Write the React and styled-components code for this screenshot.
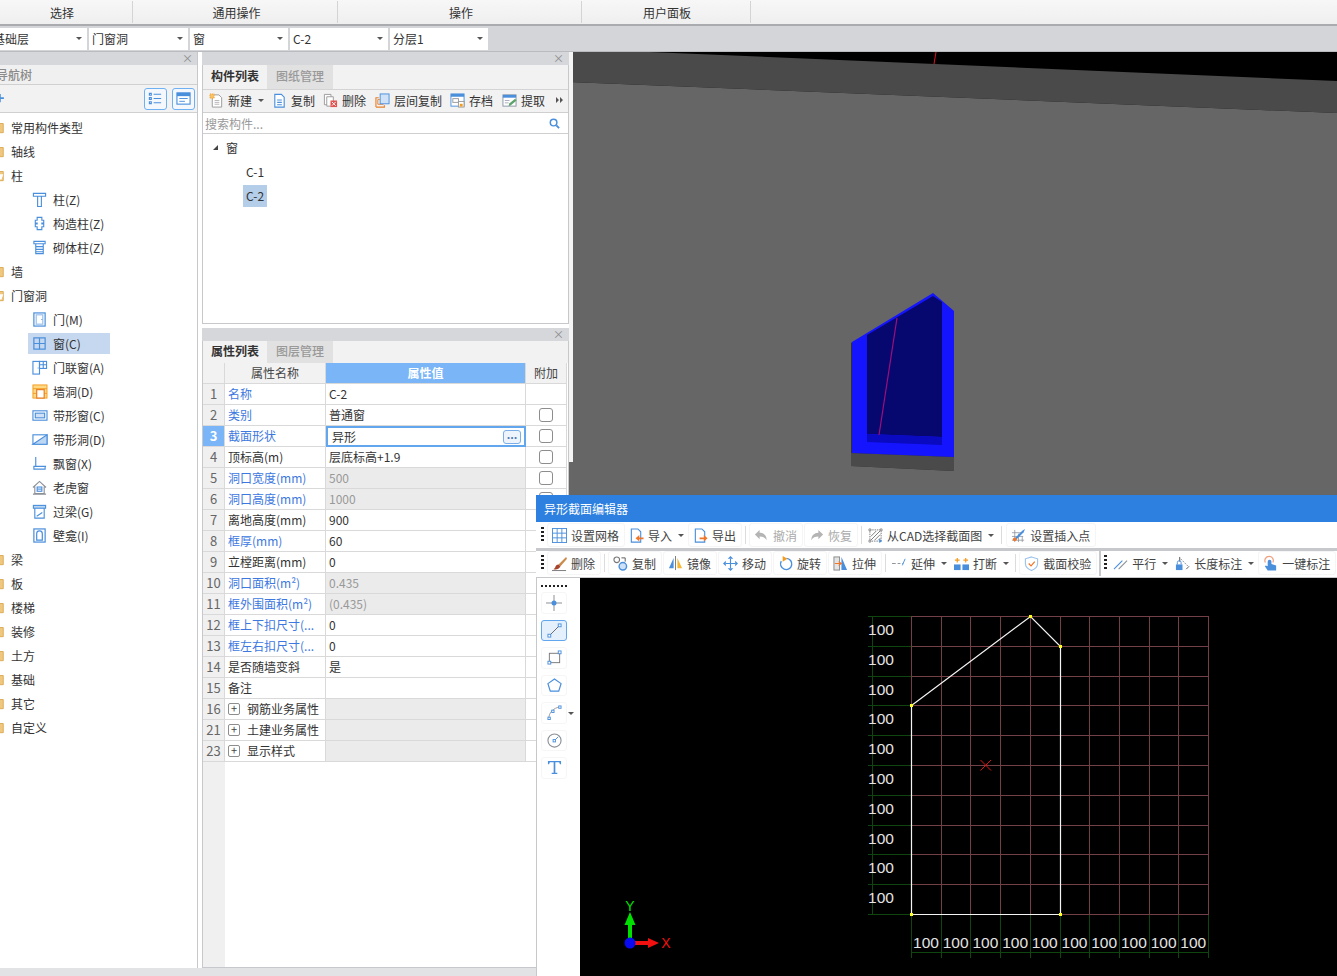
import React from "react";
import styled, { createGlobalStyle } from "styled-components";

const BLUE = "#4a8fdc";
const ORANGE = "#f39c1f";
const GRAY = "#8b9097";

const GlobalStyle = createGlobalStyle`
    html, body {
        margin: 0;
        padding: 0;
        background: #fff;
    }
    body {
        width: 1337px;
        height: 976px;
        overflow: hidden;
        font-family: "Noto Sans CJK SC", "Noto Sans", sans-serif;
        font-size: 12px;
        color: #333;
    }
`;

const Page = styled.div`
    position: relative;
    width: 1337px;
    height: 976px;
    overflow: hidden;
    display: flex;
    flex-direction: column;
`;

const MenuBar = styled.div`
    height: 24px;
    flex: none;
    display: grid;
    grid-template-columns: 133px 205px 244px 169px 1fr;
    background: linear-gradient(#f7f7f7, #efefef);
    border-bottom: 2px solid #a9abae;
`;

const MenuGroup = styled.div`
    margin-top: 1px;
    height: 22px;
    line-height: 23px;
    text-align: center;
    border-right: ${(p) => (p.$plain ? "none" : "1px solid #d4d4d4")};
    padding-right: ${(p) => p.$padR || 0}px;
    padding-left: ${(p) => p.$padL || 0}px;
    box-sizing: border-box;
`;

const SelectBar = styled.div`
    height: 26px;
    flex: none;
    display: flex;
    align-items: center;
    gap: 2px;
    background: #d3d5d9;
    margin-left: -10px;
    border-bottom: 1px solid #b9bbbf;
    box-sizing: border-box;
`;

const SelectBox = styled.div`
    width: ${(p) => p.$w}px;
    height: 22px;
    line-height: 22px;
    background: #fff;
    padding-left: 3px;
    box-sizing: border-box;
    display: flex;
    justify-content: space-between;
    align-items: center;
    padding-right: 5px;
`;

const Caret = styled.i`
    flex: none;
    display: block;
    width: 0;
    height: 0;
    border-left: 3px solid transparent;
    border-right: 3px solid transparent;
    border-top: 3px solid #555;
    margin-left: ${(p) => p.$ml || 0}px;
`;

const Main = styled.div`
    flex: 1;
    display: flex;
    min-height: 0;
`;

const LeftArea = styled.div`
    width: 569px;
    flex: none;
    display: flex;
    flex-direction: column;
`;

const Panels = styled.div`
    flex: 1;
    display: flex;
    min-height: 0;
`;

const BottomScroll = styled.div`
    height: 8px;
    flex: none;
    background: #e2e3e5;
`;

const NavPanel = styled.div`
    width: 198px;
    flex: none;
    display: flex;
    flex-direction: column;
    border-right: 1px solid #c6c8cb;
    box-sizing: border-box;
    overflow: hidden;
`;

const CenterColumn = styled.div`
    margin-left: 4px;
    width: 367px;
    flex: none;
    display: flex;
    flex-direction: column;
    gap: 4px;
`;

const Dock = styled.div`
    display: flex;
    flex-direction: column;
    border: 1px solid #c6c8cb;
    border-top: none;
    box-sizing: border-box;
    flex: ${(p) => (p.$grow ? "1" : "none")};
    height: ${(p) => (p.$h ? `${p.$h}px` : "auto")};
    min-height: 0;
`;

const DockHead = styled.div`
    height: 13px;
    flex: none;
    background: #d5d7db;
    color: #8a8a8a;
    font-size: 11px;
    line-height: 13px;
    text-align: right;
    padding-right: 5px;
    margin: 0 -1px;
`;

const NavTitle = styled.div`
    height: 19px;
    flex: none;
    line-height: 19px;
    background: #f0f0f0;
    color: #8a8a8a;
    font-weight: 500;
    margin-left: -4px;
    border-bottom: 1px solid #d0d0d0;
`;

const NavTools = styled.div`
    height: 28px;
    flex: none;
    display: flex;
    align-items: center;
    background: #f2f2f2;
    border-bottom: 1px solid #d0d0d0;
    padding-right: 2px;
    gap: 5px;
    box-sizing: border-box;
`;

const NavPlus = styled.div`
    margin-left: -3px;
`;

const NavToolBtn = styled.div`
    width: 23px;
    height: 22px;
    border: 1px solid #6fb0f2;
    border-radius: 3px;
    box-sizing: border-box;
    display: flex;
    align-items: center;
    justify-content: center;
    background: #f4f8fd;
`;

const Spacer = styled.div`
    flex: 1;
`;

const NavTree = styled.div`
    padding-top: 2px;
    flex: 1;
    background: #fff;
`;

const NavRootRow = styled.div`
    height: 24px;
    display: flex;
    align-items: center;
    gap: 6px;
    margin-left: -9px;
`;

const NavItemRow = styled.div`
    height: 24px;
    display: flex;
    align-items: center;
    padding-left: 28px;
`;

const NavItem = styled.div`
    height: 21px;
    width: ${(p) => (p.$on ? "82px" : "auto")};
    display: flex;
    align-items: center;
    gap: 6px;
    padding-left: 4px;
    box-sizing: border-box;
    background: ${(p) => (p.$on ? "#c6d8ef" : "transparent")};
`;

const TabRow = styled.div`
    height: ${(p) => p.$h}px;
    flex: none;
    display: flex;
    align-items: flex-end;
    background: #f2f2f2;
`;

const Tab = styled.div`
    width: ${(p) => (p.$on ? "64px" : "66px")};
    height: 100%;
    line-height: ${(p) => p.$lh}px;
    text-align: center;
    font-weight: ${(p) => (p.$on ? 600 : 500)};
    color: ${(p) => (p.$on ? "#333" : "#999")};
    background: ${(p) => (p.$on ? "#f2f2f2" : "#e1e1e1")};
    box-sizing: border-box;
`;

const ListTools = styled.div`
    height: 24px;
    flex: none;
    display: flex;
    align-items: center;
    background: #f2f2f2;
    border-top: 1px solid #d4d4d4;
    border-bottom: 1px solid #cfcfcf;
    padding: 0 0 2px 6px;
    box-sizing: border-box;
`;

const ListTool = styled.div`
    display: flex;
    align-items: center;
    gap: 4px;
    margin-right: ${(p) => p.$mr || 8}px;
    white-space: nowrap;
`;

const SearchRow = styled.div`
    height: 20px;
    flex: none;
    display: flex;
    align-items: center;
    justify-content: space-between;
    padding: 0 8px 0 2px;
    color: #999;
    border-bottom: 1px solid #cfcfcf;
    background: #fff;
`;

const ListTree = styled.div`
    flex: 1;
    padding-top: 2px;
    background: #fff;
`;

const ListRow = styled.div`
    height: 24px;
    display: flex;
    align-items: center;
    box-sizing: border-box;
    padding-left: ${(p) => p.$indent}px;
    padding-bottom: ${(p) => (p.$lift ? 2 : 0)}px;
`;

const ListTriangle = styled.i`
    width: 0;
    height: 0;
    border-left: 5px solid transparent;
    border-bottom: 5px solid #444;
    margin-right: 8px;
`;

const ListLabel = styled.span`
    height: 22px;
    line-height: 22px;
    padding: 0 3px;
    background: ${(p) => (p.$on ? "#b4cde9" : "transparent")};
`;

const TableWrap = styled.div`
    flex: 1;
    display: flex;
    flex-direction: column;
    min-height: 0;
    background: #fff;
`;

const Row = styled.div`
    display: grid;
    grid-template-columns: 22px 101px 200px 41px;
    height: 21px;
    flex: none;
`;

const Cell = styled.div`
    box-sizing: border-box;
    border-right: 1px solid #d9d9d9;
    border-bottom: 1px solid #d9d9d9;
    line-height: 20px;
    padding-left: 3px;
    white-space: nowrap;
    overflow: hidden;
    display: flex;
    align-items: center;
    color: ${(p) => (p.$blue ? "#3d78e0" : "#333")};
`;

const HeadCell = styled(Cell)`
    justify-content: center;
    padding: 0;
    background: ${(p) => (p.$on ? "#7ab6f7" : "#f2f2f2")};
    color: ${(p) => (p.$on ? "#fff" : "#444")};
    font-weight: ${(p) => (p.$on ? 600 : 400)};
`;

const NumCell = styled(Cell)`
    justify-content: center;
    padding: 0;
    font-size: 13px;
    background: ${(p) => (p.$on ? "#7ab6f7" : "#f0f0f0")};
    color: ${(p) => (p.$on ? "#fff" : "#666")};
    font-weight: ${(p) => (p.$on ? 700 : 400)};
`;

const ValueCell = styled(Cell)`
    background: ${(p) => (p.$off ? "#ebebeb" : "#fff")};
    color: ${(p) => (p.$off ? "#999" : "#333")};
`;

const EditCell = styled(Cell)`
    border: 2px solid #62a6ee;
    justify-content: space-between;
    padding: 0 3px 0 4px;
`;

const MoreBtn = styled.div`
    width: 16px;
    height: 12px;
    border: 1px solid #79aee6;
    border-radius: 3px;
    background: #eef4fb;
    color: #4a78b0;
    font-size: 11px;
    font-weight: 700;
    line-height: 7px;
    text-align: center;
`;

const CheckCell = styled(Cell)`
    justify-content: center;
    padding: 0;
`;

const CheckBox = styled.div`
    width: 14px;
    height: 14px;
    border: 1px solid #8d8d8d;
    border-radius: 3px;
    box-sizing: border-box;
    background: #fff;
`;

const PlusBox = styled.div`
    width: 12px;
    height: 12px;
    border: 1px solid #8d8d8d;
    border-radius: 2px;
    box-sizing: border-box;
    color: #444;
    font-size: 11px;
    line-height: 9px;
    text-align: center;
    margin-right: 7px;
`;

const TableFill = styled.div`
    flex: 1;
    width: 22px;
    background: #f0f0f0;
`;

const ViewPane = styled.div`
    flex: 1;
    min-width: 0;
    background: #000;
    line-height: 0;
`;

const Editor = styled.div`
    position: absolute;
    left: 536px;
    top: 495px;
    width: 801px;
    height: 481px;
    display: flex;
    flex-direction: column;
    background: #fff;
`;

const EditorTitle = styled.div`
    height: 27px;
    flex: none;
    line-height: 27px;
    background: #2d7fe0;
    color: #fff;
    padding-left: 8px;
`;

const EditorBar = styled.div`
    height: 26px;
    flex: none;
    display: flex;
    align-items: center;
    padding-left: 5px;
    padding-bottom: ${(p) => (p.$lift ? 2 : 0)}px;
    box-sizing: border-box;
    background: #fff;
    gap: 1px;
`;

const BarRule = styled.div`
    height: ${(p) => p.$h}px;
    flex: none;
    background: #c6c8cb;
`;

const Grip = styled.div`
    width: 3px;
    height: 16px;
    flex: none;
    margin-right: 2px;
    background: repeating-linear-gradient(#222 0 2px, transparent 2px 4px);
`;

const ToolBtn = styled.div`
    height: 22px;
    display: flex;
    align-items: center;
    gap: 4px;
    padding: 0 ${(p) => (p.$caret ? 2 : 5)}px 0 ${(p) => (p.$caret ? 2 : 4)}px;
    border: 1px solid ${(p) => (p.$caret ? "transparent" : "#f5f5f5")};
    border-radius: 3px;
    white-space: nowrap;
    color: ${(p) => (p.$off ? "#aaa" : "#444")};
`;

const ToolSep = styled.div`
    width: 1px;
    height: 18px;
    flex: none;
    margin: 0 ${(p) => p.$m || 2}px;
    background: #dcdcdc;
`;

const ThickSep = styled.div`
    width: 2px;
    height: 26px;
    flex: none;
    margin: 0 2px 0 1px;
    background: #c6c8cb;
`;

const EditorBody = styled.div`
    flex: 1;
    display: flex;
    min-height: 0;
`;

const SideTools = styled.div`
    width: 44px;
    flex: none;
    display: flex;
    flex-direction: column;
    align-items: flex-start;
    box-sizing: border-box;
    border-left: 1px solid #c6c8cb;
    padding-left: 4px;
    gap: 6px;
`;

const SideDots = styled.div`
    width: 26px;
    height: 2px;
    margin: 7px 0 -1px;
    background: repeating-linear-gradient(90deg, #222 0 2px, transparent 2px 4px);
`;

const SideBtn = styled.div`
    width: 26px;
    height: 21.5px;
    flex: none;
    position: relative;
    display: flex;
    align-items: center;
    justify-content: center;
    box-sizing: border-box;
    border: 1px solid ${(p) => (p.$on ? "#62a6ee" : "#f6f6f6")};
    border-radius: 3px;
    background: ${(p) => (p.$on ? "#e4f0fc" : "#fff")};
`;

const SideCaret = styled(Caret)`
    position: absolute;
    left: 26px;
    top: 9px;
`;

const Canvas = styled.div`
    flex: 1;
    min-width: 0;
    background: #000;
    line-height: 0;
`;

// small 16x16 drawings shared by every toolbar
const ICONS = {
    folder: <path d="M0 2h6l1.500 2H14v10.500H0z" fill="#efc77e" stroke="#d9a850" />,
    folderOpen: (
        <>
            <path d="M0 2h6l1.500 2H14v10.500H0z" fill="#efc77e" stroke="#d9a850" />
            <path d="M7 7h7l-2 6H7z" fill="#fff" />
        </>
    ),
    column: (
        <g fill="none" stroke={BLUE} strokeWidth="1.2">
            <path d="M1.5 1.5h13v3h-13zM5 4.5h6M6 4.5v11h4v-11" />
        </g>
    ),
    conColumn: (
        <path d="M5.5 1.5h5v3h2v3h-2v1h2v3h-2v3h-5v-3h-2v-3h2v-1h-2v-3h2z" fill="none" stroke={BLUE} strokeWidth="1.2" />
    ),
    brickColumn: (
        <g fill="none" stroke={BLUE} strokeWidth="1.2">
            <path d="M2 1.5h12v2.5H2zM4 4v10.5h8V4M4 7h8M4 10h8M4 12.5h8" />
        </g>
    ),
    door: (
        <g fill="none" stroke={BLUE} strokeWidth="1.3">
            <rect x="2" y="1" width="12" height="14" />
            <rect x="4.5" y="3" width="7" height="10" stroke="#9cc2ec" />
            <path d="M10 8h1" />
        </g>
    ),
    windowPane: (
        <g fill="none" stroke={BLUE} strokeWidth="1.3">
            <rect x="2" y="2" width="12" height="12" />
            <path d="M8 2v12M2 8h12" />
        </g>
    ),
    doorWindow: (
        <g fill="none" stroke={BLUE} strokeWidth="1.2">
            <rect x="1" y="1.5" width="7" height="13.5" />
            <rect x="8" y="1.5" width="7.5" height="7.5" />
            <path d="M12 1.5v7.5M8 5h7.5M6 8.5h1" />
        </g>
    ),
    wallHole: (
        <g>
            <rect x="1" y="1" width="15" height="14" fill="#ffd884" stroke={ORANGE} />
            <path d="M1 5h15M1 10h4M12 10h4" stroke={ORANGE} />
            <rect x="5" y="6" width="8" height="9" fill="#fff" stroke="#e8802a" strokeWidth="1.3" />
        </g>
    ),
    stripWindow: (
        <g fill="none" stroke={BLUE} strokeWidth="1.2">
            <rect x="1" y="3" width="15" height="10" />
            <rect x="3.5" y="5.5" width="10" height="5" fill="#cfe1f6" />
        </g>
    ),
    stripHole: (
        <g fill="none" stroke={BLUE} strokeWidth="1.2">
            <rect x="1" y="3" width="15" height="10" />
            <path d="M1 13L16 3v10z" fill="#bcd6f3" />
        </g>
    ),
    bay: (
        <g fill="none" stroke={BLUE} strokeWidth="1.2">
            <path d="M4 1v10h11M2 11h12v3H2z" />
        </g>
    ),
    dormer: (
        <g fill="none" stroke={GRAY} strokeWidth="1.2">
            <path d="M1 8l7-6.500L15 8M3 7v7.500h10V7M1 15h14" />
            <rect x="5.500" y="7.500" width="5" height="4.500" stroke={BLUE} />
            <path d="M5.500 9.700h5" stroke={BLUE} />
        </g>
    ),
    lintel: (
        <g fill="none" stroke={BLUE} strokeWidth="1.2">
            <rect x="1.500" y="1.500" width="13" height="3" fill="#bcd6f3" />
            <path d="M3 4.500v10.500h10V4.500M5 13l6-4" />
        </g>
    ),
    niche: (
        <g fill="none" stroke={BLUE} strokeWidth="1.3">
            <rect x="2" y="1" width="12" height="14" />
            <path d="M5 13V6a3 3 0 0 1 6 0v7z" />
        </g>
    ),
    plusStar: <path d="M6 0v5h5v3H6v5H3V8H0V5h3V0z" fill={BLUE} />,
    listView: (
        <g fill="none" stroke={BLUE} strokeWidth="1.2">
            <path d="M6 3.500h8M6 8h8M6 12.500h8" />
            <path d="M1.500 2.500h2v2h-2zM1.500 7h2v2h-2zM1.500 11.500h2v2h-2z" />
        </g>
    ),
    panelView: (
        <g>
            <rect x="1" y="2" width="14" height="12" fill="#fff" stroke={BLUE} strokeWidth="1.2" />
            <rect x="1" y="2" width="14" height="3.500" fill={BLUE} />
            <path d="M3.500 8h9M3.500 11h6" stroke={BLUE} />
        </g>
    ),
    newDoc: (
        <g>
            <path d="M3.500 2h7l3 3v10h-10z" fill="#fff" stroke="#9a9a9a" />
            <path d="M6 8h5M6 10h5M6 12h5" stroke="#b5b5b5" />
            <rect x="1" y="1" width="4.500" height="4.500" fill="#f7c26a" stroke={ORANGE} strokeDasharray="1 1" />
        </g>
    ),
    copyDoc: (
        <g fill="#fff" stroke={BLUE} strokeWidth="1.200">
            <path d="M3 1.500h7l3 3v10.500H3z" />
            <path d="M5.500 7.500h5M5.500 10h5M5.500 12.500h5" fill="none" />
        </g>
    ),
    deleteDoc: (
        <g>
            <path d="M1.500 1.500h7v11h-7z" fill="#fff" stroke="#9a9a9a" />
            <path d="M4 4h7v10H4z" fill="#fff" stroke="#9a9a9a" />
            <rect x="8" y="8" width="7" height="7" fill="#e2534f" />
            <path d="M9.500 9.500l4 4M13.500 9.500l-4 4" stroke="#fff" />
        </g>
    ),
    floorCopy: (
        <g>
            <path d="M1 15V5h3M1 15h9v-2" fill="none" stroke="#e8802a" strokeWidth="1.200" />
            <path d="M3 12V7h2M3 12h6" fill="none" stroke="#e8802a" />
            <rect x="5.500" y="1" width="9.500" height="10.500" fill="#cfe1f6" stroke={BLUE} />
        </g>
    ),
    archive: (
        <g>
            <rect x="1" y="1" width="14" height="13" fill="#fff" stroke={BLUE} />
            <rect x="1" y="1" width="14" height="3" fill={BLUE} />
            <rect x="3" y="6" width="6" height="4" fill="#fff" stroke="#999" />
            <rect x="9" y="9" width="6" height="6" fill="#fff" stroke="#999" />
            <rect x="10.500" y="11.500" width="3" height="3" fill={ORANGE} />
        </g>
    ),
    extract: (
        <g>
            <rect x="1" y="2" width="14" height="12" fill="#fff" stroke="#8a96a3" />
            <rect x="1" y="2" width="14" height="3" fill={BLUE} />
            <path d="M3 8h5M3 10.500h4" stroke="#aab" />
            <path d="M7 14l1-3 6-5 1.500 2-6 5z" fill="#5aa36a" />
        </g>
    ),
    grid: (
        <g fill="none" stroke={BLUE} strokeWidth="1">
            <rect x="0.500" y="0.500" width="15" height="15" />
            <path d="M5.500 0.500v15M10.500 0.500v15M0.500 5.500h15M0.500 10.500h15" />
        </g>
    ),
    importDoc: (
        <g>
            <path d="M2.500 1h7l3 3v11h-10z" fill="#fff" stroke={BLUE} strokeWidth="1.200" />
            <path d="M15.500 10H11V7.500L7 11l4 3.500V12h4.500z" fill="#f0762a" />
        </g>
    ),
    exportDoc: (
        <g>
            <path d="M2.500 1h7l3 3v11h-10z" fill="#fff" stroke={BLUE} strokeWidth="1.200" />
            <path d="M7 10h4.500V7.500l4 3.500-4 3.500V12H7z" fill="#f0762a" />
        </g>
    ),
    undo: <path d="M6 2L1 7l5 5V9c3.500 0 6 1 7.500 4 0-5-3-8-7.500-8z" fill="#b4b4b4" />,
    redo: <path d="M10 2l5 5-5 5V9c-3.500 0-6 1-7.500 4 0-5 3-8 7.500-8z" fill="#b4b4b4" />,
    cadSelect: (
        <g>
            <rect x="2" y="2" width="12" height="12" fill="#fff" stroke="#777" strokeDasharray="1.500 1" />
            <path d="M3 9l6-6M3 13l10-10M7 13l6-6M11 13l2-2" stroke="#777" />
            <path d="M1 1h2v2H1zM13 1h2v2h-2zM1 13h2v2H1z" fill="#fff" stroke="#777" strokeWidth="0.800" />
            <path d="M12 11v5l3-2z" fill={BLUE} />
        </g>
    ),
    insertPoint: (
        <g>
            <path d="M1 5h10M1 9h12M1 13h13M4 2v13M8 6v9M12 9v6" stroke="#8a8f96" strokeWidth="0.800" />
            <path d="M4 11l8-8 3-2-1.500 3.500-8 8z" fill={BLUE} />
            <circle cx="4" cy="12" r="2" fill="#f0762a" />
        </g>
    ),
    brush: (
        <g>
            <path d="M15 1L7 9l2 2 7-8z" fill="#c98a4a" />
            <path d="M7 9c-2 0-3 1-3.500 3-.2 1-1 1.500-2 2 2.500.8 6 .5 7.500-3z" fill="#a8432c" />
            <path d="M0 15.500h15" stroke="#777" />
        </g>
    ),
    editCopy: (
        <g fill="none">
            <circle cx="4" cy="4" r="3" fill="#fff" stroke="#777" strokeWidth="1.200" />
            <circle cx="10.500" cy="11" r="4" fill="#cfe1f6" stroke={BLUE} strokeWidth="1.500" />
            <path d="M9 2h4v4" stroke="#555" />
        </g>
    ),
    mirror: (
        <g>
            <path d="M1 13L6 2v11z" fill={BLUE} />
            <path d="M8 0v15" stroke="#777" />
            <path d="M10 2l5 11h-5z" fill="#f7b733" />
        </g>
    ),
    move: (
        <g fill={BLUE}>
            <path d="M8 0l3 3H5zM8 16l-3-3h6zM0 8l3-3v6zM16 8l-3 3V5z" />
            <path d="M3 7.400h10v1.200H3zM7.400 3h1.200v10H7.400z" />
        </g>
    ),
    rotate: (
        <g>
            <path d="M9 2.500a6 6 0 1 1-5.500 3" fill="none" stroke={BLUE} strokeWidth="1.500" />
            <path d="M5 0l5 3-5 3z" fill={ORANGE} />
        </g>
    ),
    stretch: (
        <g>
            <rect x="1" y="1" width="6" height="14" fill="#e4e4e4" stroke="#888" />
            <path d="M9 1l6 14H9z" fill={BLUE} />
            <path d="M2 8h6M6 6l3 2-3 2" fill="none" stroke="#f0762a" strokeWidth="1.200" />
        </g>
    ),
    extend: (
        <g stroke={GRAY} fill="none">
            <path d="M0 8h4M6 8h3" />
            <path d="M11 10l3-7" stroke={BLUE} />
            <path d="M11 8h1" stroke={BLUE} />
        </g>
    ),
    split: (
        <g>
            <rect x="0" y="9" width="7" height="6" fill={BLUE} />
            <rect x="9" y="9" width="7" height="6" fill={BLUE} />
            <path d="M3.500 2v5M1 4.500h5M12.500 2v5M10 4.500h5" stroke={ORANGE} strokeWidth="1.300" />
        </g>
    ),
    shield: (
        <g fill="none">
            <path d="M8 1l6.500 2v5c0 3.500-3 6-6.500 7.500C4.500 14 1.500 11.500 1.500 8V3z" stroke="#9cc2ec" strokeWidth="1.200" />
            <path d="M5 8l2.500 2.500L11.500 6" stroke="#f0762a" strokeWidth="1.300" />
        </g>
    ),
    parallel: (
        <g fill="none" strokeWidth="1.200">
            <path d="M1 14L10 5" stroke={BLUE} />
            <path d="M6 14l9-9" stroke={GRAY} />
        </g>
    ),
    lengthMark: (
        <g>
            <path d="M6 3l8 8" stroke={GRAY} strokeDasharray="2 1" />
            <path d="M5 1v5M12 14l3-3" stroke="#555" />
            <rect x="1" y="9" width="7" height="6" fill={BLUE} />
            <path d="M2.500 9V7a2 2 0 0 1 4 0v2" fill="none" stroke={BLUE} />
        </g>
    ),
    oneKey: (
        <g>
            <path d="M2.500 7a4.500 4.500 0 1 1 8 0" fill="none" stroke="#f0a080" strokeWidth="1.300" />
            <path d="M5 6v5L3 10l-1 1 3 4.500h9V10l-5-1.500V6a2 2 0 0 0-4 0z" fill={BLUE} />
        </g>
    ),
    point: (
        <g stroke={GRAY}>
            <path d="M0 8h16M8 0v16" />
            <circle cx="8" cy="8" r="2.500" fill={BLUE} stroke="none" />
        </g>
    ),
    line: (
        <g fill="#fff">
            <path d="M2.500 13.500L13.500 2.500" stroke="#666" />
            <rect x="1" y="12" width="3" height="3" stroke={BLUE} />
            <rect x="12" y="1" width="3" height="3" stroke={BLUE} />
        </g>
    ),
    rect: (
        <g fill="#fff">
            <rect x="2.500" y="3.500" width="11" height="10" stroke="#777" />
            <rect x="1" y="12" width="3" height="3" stroke={BLUE} />
            <rect x="12" y="1" width="3" height="3" stroke={BLUE} />
        </g>
    ),
    pentagon: <path d="M8 1l7 5-2.500 8h-9L1 6z" fill="none" stroke={BLUE} strokeWidth="1.300" />,
    arc: (
        <g fill="#fff">
            <path d="M2 14C2 8 7 3 14 2" fill="none" stroke="#999" />
            <rect x="1" y="13" width="2.500" height="2.500" stroke={BLUE} />
            <rect x="5" y="5.500" width="2.500" height="2.500" stroke={BLUE} />
            <rect x="12.500" y="1" width="2.500" height="2.500" stroke={BLUE} />
        </g>
    ),
    circle: (
        <g fill="none">
            <circle cx="8" cy="8" r="7" stroke="#8a8f96" strokeWidth="1.200" />
            <path d="M8 8l4-4" stroke={BLUE} />
            <rect x="6.500" y="7" width="2.500" height="2.500" stroke={BLUE} fill="#fff" />
        </g>
    ),
    textTool: <path d="M1 1h14v3.500h-1.200L13 2.500H8.900v11H11V15H5v-1.500h2.100v-11H3L2.200 4.500H1z" fill={BLUE} />,
};

const IconSvg = styled.svg`
    flex: none;
    display: block;
    overflow: visible;
`;

function Icon({ name, size = 15 }) {
    return (
        <IconSvg width={size} height={size} viewBox="0 0 16 16">
            {ICONS[name]}
        </IconSvg>
    );
}

const NAV = [
    { label: "常用构件类型" },
    { label: "轴线" },
    { label: "柱", open: true },
    { label: "柱(Z)", icon: "column" },
    { label: "构造柱(Z)", icon: "conColumn" },
    { label: "砌体柱(Z)", icon: "brickColumn" },
    { label: "墙" },
    { label: "门窗洞", open: true },
    { label: "门(M)", icon: "door" },
    { label: "窗(C)", icon: "windowPane", on: true },
    { label: "门联窗(A)", icon: "doorWindow" },
    { label: "墙洞(D)", icon: "wallHole" },
    { label: "带形窗(C)", icon: "stripWindow" },
    { label: "带形洞(D)", icon: "stripHole" },
    { label: "飘窗(X)", icon: "bay" },
    { label: "老虎窗", icon: "dormer" },
    { label: "过梁(G)", icon: "lintel" },
    { label: "壁龛(I)", icon: "niche" },
    { label: "梁" },
    { label: "板" },
    { label: "楼梯" },
    { label: "装修" },
    { label: "土方" },
    { label: "基础" },
    { label: "其它" },
    { label: "自定义" },
];

const LIST_TOOLS = [
    { icon: "copyDoc", label: "复制", mr: 8 },
    { icon: "deleteDoc", label: "删除", mr: 9 },
    { icon: "floorCopy", label: "层间复制", mr: 8 },
    { icon: "archive", label: "存档", mr: 9 },
    { icon: "extract", label: "提取", mr: 11 },
];

const PROPS = [
    { n: 1, name: "名称", blue: true, value: "C-2", noCheck: true },
    { n: 2, name: "类别", blue: true, value: "普通窗" },
    { n: 3, name: "截面形状", blue: true, value: "异形", edit: true },
    { n: 4, name: "顶标高(m)", value: "层底标高+1.9" },
    { n: 5, name: "洞口宽度(mm)", blue: true, value: "500", off: true },
    { n: 6, name: "洞口高度(mm)", blue: true, value: "1000", off: true },
    { n: 7, name: "离地高度(mm)", value: "900", noCheck: true },
    { n: 8, name: "框厚(mm)", blue: true, value: "60", noCheck: true },
    { n: 9, name: "立樘距离(mm)", value: "0", noCheck: true },
    { n: 10, name: "洞口面积(m²)", blue: true, value: "0.435", off: true, noCheck: true },
    { n: 11, name: "框外围面积(m²)", blue: true, value: "(0.435)", off: true, noCheck: true },
    { n: 12, name: "框上下扣尺寸(...", blue: true, value: "0", noCheck: true },
    { n: 13, name: "框左右扣尺寸(...", blue: true, value: "0", noCheck: true },
    { n: 14, name: "是否随墙变斜", value: "是", noCheck: true },
    { n: 15, name: "备注", value: "", noCheck: true },
    { n: 16, name: "钢筋业务属性", group: true, off: true, value: "", noCheck: true },
    { n: 21, name: "土建业务属性", group: true, off: true, value: "", noCheck: true },
    { n: 23, name: "显示样式", group: true, off: true, value: "", noCheck: true },
];

const BAR_ONE = [
    { icon: "grid", label: "设置网格" },
    { icon: "importDoc", label: "导入", caret: true },
    { icon: "exportDoc", label: "导出" },
    { sep: true },
    { icon: "undo", label: "撤消", off: true },
    { icon: "redo", label: "恢复", off: true },
    { sep: true },
    { icon: "cadSelect", label: "从CAD选择截面图", caret: true },
    { sep: true, m: 3 },
    { icon: "insertPoint", label: "设置插入点" },
];

const BAR_TWO = [
    { icon: "brush", label: "删除" },
    { sep: true },
    { icon: "editCopy", label: "复制" },
    { icon: "mirror", label: "镜像" },
    { icon: "move", label: "移动" },
    { icon: "rotate", label: "旋转" },
    { icon: "stretch", label: "拉伸" },
    { sep: true },
    { icon: "extend", label: "延伸", caret: true },
    { icon: "split", label: "打断", caret: true },
    { sep: true },
    { icon: "shield", label: "截面校验" },
    { thick: true },
    { icon: "parallel", label: "平行", caret: true },
    { icon: "lengthMark", label: "长度标注", caret: true },
    { icon: "oneKey", label: "一键标注" },
];

const SIDE = ["point", "line", "rect", "pentagon", "arc", "circle", "textTool"];

function ToolRow({ items }) {
    return items.map((it, idx) => {
        if (it.sep) return <ToolSep key={idx} $m={it.m} />;
        if (it.thick)
            return (
                <React.Fragment key={idx}>
                    <ThickSep />
                    <Grip />
                </React.Fragment>
            );
        return (
            <ToolBtn key={idx} $caret={it.caret} $off={it.off}>
                <Icon name={it.icon} />
                <span>{it.label}</span>
                {it.caret && <Caret $ml={2} />}
            </ToolBtn>
        );
    });
}

function Scene3D() {
    return (
        <svg width="768" height="924" viewBox="569 52 768 924">
            <rect x="569" y="52" width="768" height="924" fill="#000" />
            <path d="M569 52H649L1337 81V113L569 82z" fill="#4a4a4a" />
            <path d="M569 82L1337 113V976H569z" fill="#666" />
            <path d="M936 52l-2 12" stroke="#e01020" />
            <path d="M851 342v124l103 5v-14z" fill="#303030" />
            <path d="M851 453l103 4v14l-103-5z" fill="#4a4a4a" />
            <path d="M852 342L933 293l21 18v146l-102-4z" fill="#1414ff" />
            <path d="M867 335L933 296l9 6v135l-75-3z" fill="#070770" />
            <path d="M867 434l75 3v8l-75-3z" fill="#0a0ac0" />
            <path d="M897 318l-18 117" stroke="#a0107a" strokeWidth="1.200" />
            <rect x="569" y="52" width="4" height="410" fill="#f4f4f4" />
        </svg>
    );
}

function SectionDrawing() {
    const stepX = 29.7;
    const stepY = 29.8;
    const x0 = 911;
    const y0 = 615;
    const ticks = Array.from({ length: 11 }, (_, i) => i);
    const cells = ticks.slice(0, 10);
    const px = (v) => Math.round(v) + 0.5;
    const outline = "911.500,704.500 1030.500,615.500 1060.500,645.500 1060.500,913.500 911.500,913.500";
    const corners = [
        [911, 704],
        [1030, 615],
        [1060, 645],
        [1060, 913],
        [911, 913],
    ];
    return (
        <svg width="757" height="399" viewBox="580 577 757 399">
            <rect x="580" y="577" width="757" height="399" fill="#000" />
            <g stroke="#0f460f" fill="none">
                <path d="M872.500 615V913" />
                <path d="M911 951.500H1208" />
                {ticks.map((i) => (
                    <path key={i} d={`M868 ${px(y0 + i * stepY)}H${x0} M${px(x0 + i * stepX)} 913V957`} />
                ))}
            </g>
            <g stroke="#744048" fill="none">
                {ticks.map((i) => (
                    <path key={i} d={`M${x0} ${px(y0 + i * stepY)}H1209M${px(x0 + i * stepX)} ${y0}V914`} />
                ))}
            </g>
            <polygon points={outline} fill="none" stroke="#f4f4f4" strokeWidth="1.200" />
            {corners.map(([x, y]) => (
                <rect key={x + "-" + y} x={x - 1} y={y - 1} width="3" height="3" fill="#ffff20" />
            ))}
            <path d="M980.500 759l10.500 10.500M991 759l-10.500 10.500" stroke="#e01010" />
            <g fill="#e4e4e4" fontFamily="'Liberation Sans', sans-serif" fontSize="15.500">
                {cells.map((i) => (
                    <text key={"l" + i} x="881" y={y0 + i * stepY + 21} textAnchor="middle" dy="-2">
                        100
                    </text>
                ))}
                {cells.map((i) => (
                    <text key={"b" + i} x={x0 + i * stepX + 15} y="947" textAnchor="middle">
                        100
                    </text>
                ))}
            </g>
            <path d="M630 942V920" stroke="#00e000" strokeWidth="4" />
            <path d="M630 911l5.500 13h-11z" fill="#00e000" />
            <path d="M632 942h18" stroke="#f01010" strokeWidth="4" />
            <path d="M659 942l-11 5v-10z" fill="#f01010" />
            <circle cx="630" cy="942" r="5.500" fill="#0a0af0" />
            <text x="630" y="910" textAnchor="middle" fill="#00e000" fontFamily="'Liberation Sans', sans-serif" fontSize="14">
                Y
            </text>
            <text x="666" y="947" textAnchor="middle" fill="#f01010" fontFamily="'Liberation Sans', sans-serif" fontSize="14">
                X
            </text>
        </svg>
    );
}

export default function App() {
    return (
        <Page>
            <GlobalStyle />
            <MenuBar>
                <MenuGroup $padR={8}>选择</MenuGroup>
                <MenuGroup $padL={3}>通用操作</MenuGroup>
                <MenuGroup $padL={3}>操作</MenuGroup>
                <MenuGroup $padL={2}>用户面板</MenuGroup>
                <MenuGroup $plain />
            </MenuBar>
            <SelectBar>
                <SelectBox $w={97}>基础层<Caret /></SelectBox>
                <SelectBox $w={99}>门窗洞<Caret /></SelectBox>
                <SelectBox $w={98}>窗<Caret /></SelectBox>
                <SelectBox $w={98}>C-2<Caret /></SelectBox>
                <SelectBox $w={98}>分层1<Caret /></SelectBox>
            </SelectBar>
            <Main>
                <LeftArea>
                    <Panels>
                        <NavPanel>
                            <DockHead>×</DockHead>
                            <NavTitle>导航树</NavTitle>
                            <NavTools>
                                <NavPlus><Icon name="plusStar" size={10} /></NavPlus>
                                <Spacer />
                                <NavToolBtn><Icon name="listView" /></NavToolBtn>
                                <NavToolBtn><Icon name="panelView" /></NavToolBtn>
                            </NavTools>
                            <NavTree>
                                {NAV.map((n) =>
                                    n.icon ? (
                                        <NavItemRow key={n.label + n.icon}>
                                            <NavItem $on={n.on}>
                                                <Icon name={n.icon} />
                                                <span>{n.label}</span>
                                            </NavItem>
                                        </NavItemRow>
                                    ) : (
                                        <NavRootRow key={n.label}>
                                            <Icon name={n.open ? "folderOpen" : "folder"} size={14} />
                                            <span>{n.label}</span>
                                        </NavRootRow>
                                    )
                                )}
                            </NavTree>
                        </NavPanel>
                        <CenterColumn>
                            <Dock $h={272}>
                                <DockHead>×</DockHead>
                                <TabRow $h={24}>
                                    <Tab $on $lh={22}>构件列表</Tab>
                                    <Tab $lh={22}>图纸管理</Tab>
                                </TabRow>
                                <ListTools>
                                    <ListTool $mr={8}>
                                        <Icon name="newDoc" />
                                        <span>新建</span>
                                        <Caret $ml={2} />
                                    </ListTool>
                                    {LIST_TOOLS.map((t) => (
                                        <ListTool key={t.icon} $mr={t.mr}>
                                            <Icon name={t.icon} />
                                            <span>{t.label}</span>
                                        </ListTool>
                                    ))}
                                    <svg width="7" height="6" viewBox="0 0 7 6">
                                        <path d="M0 0l3 3-3 3zM4 0l3 3-3 3z" fill="#555" />
                                    </svg>
                                </ListTools>
                                <SearchRow>
                                    <span>搜索构件...</span>
                                    <svg width="11" height="11" viewBox="0 0 12 12">
                                        <circle cx="5" cy="5" r="3.600" fill="none" stroke="#4a8fdc" strokeWidth="1.600" />
                                        <path d="M8 8l3 3" stroke="#4a8fdc" strokeWidth="2" />
                                    </svg>
                                </SearchRow>
                                <ListTree>
                                    <ListRow $indent={10} $lift>
                                        <ListTriangle />
                                        <span>窗</span>
                                    </ListRow>
                                    <ListRow $indent={40}>
                                        <ListLabel>C-1</ListLabel>
                                    </ListRow>
                                    <ListRow $indent={40}>
                                        <ListLabel $on>C-2</ListLabel>
                                    </ListRow>
                                </ListTree>
                            </Dock>
                            <Dock $grow>
                                <DockHead>×</DockHead>
                                <TabRow $h={22}>
                                    <Tab $on $lh={20}>属性列表</Tab>
                                    <Tab $lh={20}>图层管理</Tab>
                                </TabRow>
                                <TableWrap>
                                    <Row>
                                        <HeadCell />
                                        <HeadCell>属性名称</HeadCell>
                                        <HeadCell $on>属性值</HeadCell>
                                        <HeadCell>附加</HeadCell>
                                    </Row>
                                    {PROPS.map((p) => (
                                        <Row key={p.n}>
                                            <NumCell $on={p.edit}>{p.n}</NumCell>
                                            <Cell $blue={p.blue}>
                                                {p.group && <PlusBox>+</PlusBox>}
                                                {p.name}
                                            </Cell>
                                            {p.edit ? (
                                                <EditCell>
                                                    {p.value}
                                                    <MoreBtn>...</MoreBtn>
                                                </EditCell>
                                            ) : (
                                                <ValueCell $off={p.off}>{p.value}</ValueCell>
                                            )}
                                            <CheckCell>{!p.noCheck && <CheckBox />}</CheckCell>
                                        </Row>
                                    ))}
                                    <TableFill />
                                </TableWrap>
                            </Dock>
                        </CenterColumn>
                    </Panels>
                    <BottomScroll />
                </LeftArea>
                <ViewPane>
                    <Scene3D />
                </ViewPane>
            </Main>
            <Editor>
                <EditorTitle>异形截面编辑器</EditorTitle>
                <EditorBar>
                    <Grip />
                    <ToolRow items={BAR_ONE} />
                </EditorBar>
                <BarRule $h={3} />
                <EditorBar $lift>
                    <Grip />
                    <ToolRow items={BAR_TWO} />
                </EditorBar>
                <BarRule $h={1} />
                <EditorBody>
                    <SideTools>
                        <SideDots />
                        {SIDE.map((s) => (
                            <SideBtn key={s} $on={s === "line"}>
                                <Icon name={s} size={s === "point" ? 16 : 15} />
                                {s === "arc" && <SideCaret />}
                            </SideBtn>
                        ))}
                    </SideTools>
                    <Canvas>
                        <SectionDrawing />
                    </Canvas>
                </EditorBody>
            </Editor>
        </Page>
    );
}
